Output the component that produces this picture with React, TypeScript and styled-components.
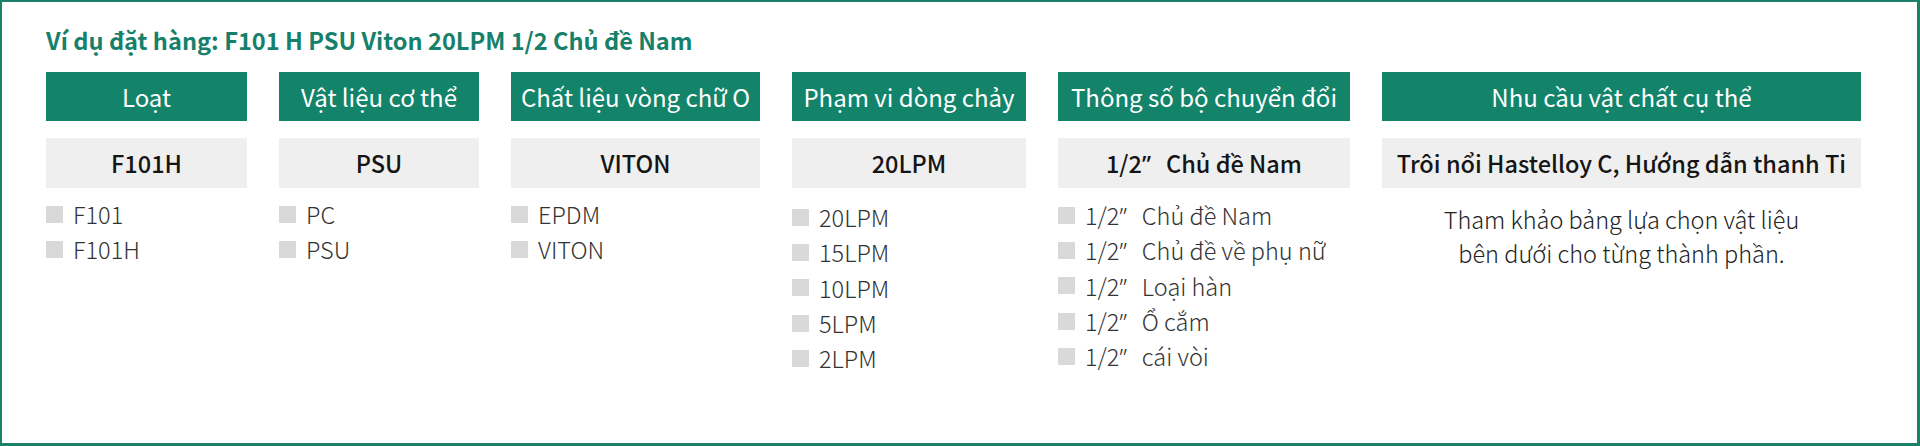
import React from "react";
import styled, { createGlobalStyle } from "styled-components";

const Global = createGlobalStyle`
  html, body { margin: 0; padding: 0; background: #ffffff; }
  body { font-family: "Noto Sans CJK SC", "Noto Sans", sans-serif; }
  * { box-sizing: border-box; }
`;

const Frame = styled.div`
  width: 1920px;
  height: 446px;
  border-style: solid;
  border-color: #1b7f69;
  border-width: 2px 3px 3px 2px;
  padding: 23px 0 0 44px;
  background: #ffffff;
  overflow: hidden;
`;

const Title = styled.h1`
  margin: 0 0 17px 0;
  font-size: 23.6px;
  line-height: 30px;
  font-weight: 700;
  color: #16806a;
  white-space: nowrap;
`;

const Columns = styled.div`
  display: flex;
  align-items: flex-start;
  gap: 32px;
`;

const Column = styled.div<{ $w: number }>`
  width: ${(p) => p.$w}px;
  display: flex;
  flex-direction: column;
  flex: none;
`;

const Header = styled.div`
  height: 49px;
  background: #13846a;
  color: #ffffff;
  font-size: 24px;
  font-weight: 400;
  display: flex;
  align-items: center;
  justify-content: center;
  white-space: nowrap;
`;

const Value = styled.div`
  margin-top: 17px;
  height: 50px;
  line-height: 50px;
  background: #efefef;
  color: #151515;
  font-size: 23.5px;
  font-weight: 500;
  text-align: center;
  white-space: nowrap;
`;

const List = styled.ul<{ $offset: number }>`
  list-style: none;
  margin: ${(p) => 8.5 + p.$offset}px 0 0 0;
  padding: 0;
  display: flex;
  flex-direction: column;
`;

const Item = styled.li`
  display: flex;
  align-items: center;
  height: 35.3px;
  font-size: 23.5px;
  font-weight: 300;
  color: #333333;
  white-space: nowrap;
`;

const Square = styled.span`
  width: 17px;
  height: 17px;
  background: #d9d9d9;
  flex: none;
  margin-right: 10px;
`;

const Label = styled.span`
  display: inline-block;
`;

const Inch = styled.span`
  font-family: "Noto Sans", "Liberation Sans", sans-serif;
  word-spacing: 9px;
`;

const Note = styled.p`
  margin: 14px 0 0 0;
  text-align: center;
  font-size: 23.5px;
  line-height: 34px;
  font-weight: 300;
  color: #222222;
`;

type Col = {
  w: number;
  head: string;
  value: string;
  items?: string[];
  offset?: number;
  note?: string[];
};

const cols: Col[] = [
  { w: 201, head: "Loạt", value: "F101H", items: ["F101", "F101H"], offset: 0 },
  { w: 200, head: "Vật liệu cơ thể", value: "PSU", items: ["PC", "PSU"], offset: 0 },
  { w: 249, head: "Chất liệu vòng chữ O", value: "VITON", items: ["EPDM", "VITON"], offset: 0 },
  {
    w: 234,
    head: "Phạm vi dòng chảy",
    value: "20LPM",
    items: ["20LPM", "15LPM", "10LPM", "5LPM", "2LPM"],
    offset: 3,
  },
  {
    w: 292,
    head: "Thông số bộ chuyển đổi",
    value: "1/2” Chủ đề Nam",
    items: [
      "1/2” Chủ đề Nam",
      "1/2” Chủ đề về phụ nữ",
      "1/2” Loại hàn",
      "1/2” Ổ cắm",
      "1/2” cái vòi",
    ],
    offset: 1,
  },
  {
    w: 479,
    head: "Nhu cầu vật chất cụ thể",
    value: "Trôi nổi Hastelloy C, Hướng dẫn thanh Ti",
    note: ["Tham khảo bảng lựa chọn vật liệu", "bên dưới cho từng thành phần."],
  },
];

function withInch(text: string) {
  const i = text.indexOf("” ");
  if (i < 0) return text;
  return (
    <>
      {text.slice(0, i)}
      <Inch>” </Inch>
      {text.slice(i + 2)}
    </>
  );
}

export default function App() {
  return (
    <>
      <Global />
      <Frame>
        <Title>Ví dụ đặt hàng: F101 H PSU Viton 20LPM 1/2 Chủ đề Nam</Title>
        <Columns>
          {cols.map((c) => (
            <Column key={c.head} $w={c.w}>
              <Header>{c.head}</Header>
              <Value>
                <Label>{withInch(c.value)}</Label>
              </Value>
              {c.items && (
                <List $offset={c.offset ?? 0}>
                  {c.items.map((it) => (
                    <Item key={it}>
                      <Square />
                      <Label>{withInch(it)}</Label>
                    </Item>
                  ))}
                </List>
              )}
              {c.note && (
                <Note>
                  {c.note[0]}
                  <br />
                  {c.note[1]}
                </Note>
              )}
            </Column>
          ))}
        </Columns>
      </Frame>
    </>
  );
}
